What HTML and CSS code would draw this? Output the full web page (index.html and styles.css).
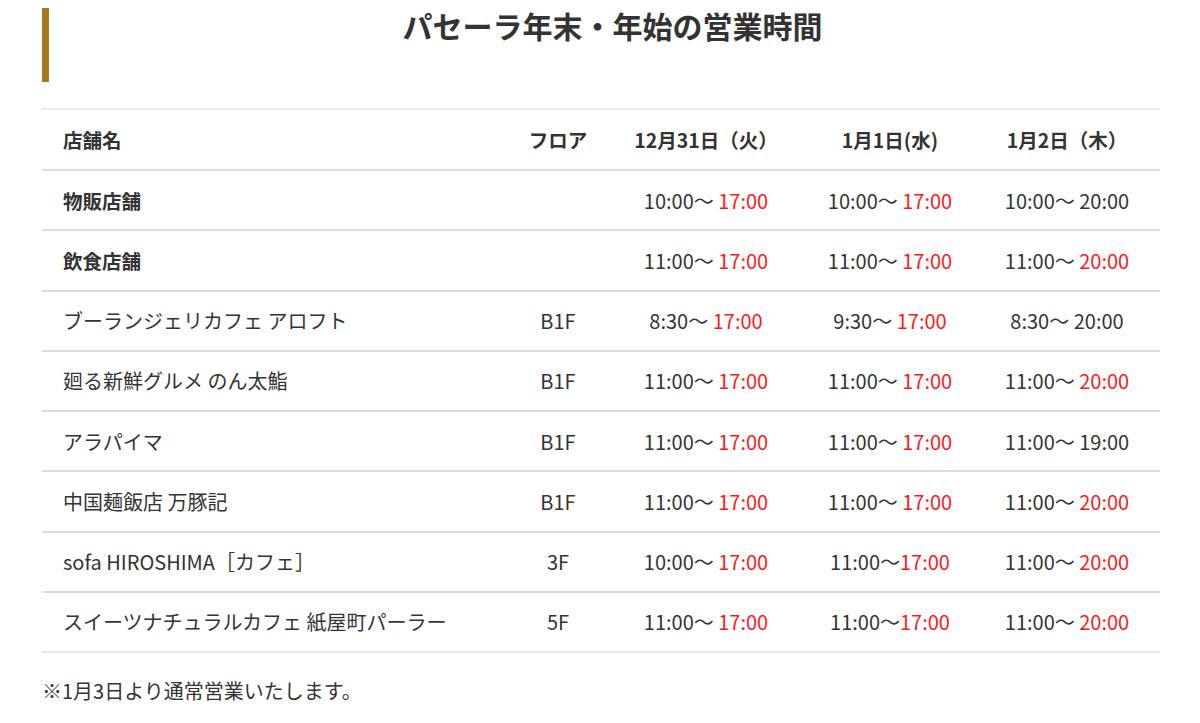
FILE: index.html
```html
<!DOCTYPE html>
<html lang="ja">
<head>
<meta charset="utf-8">
<title>パセーラ年末・年始の営業時間</title>
<link rel="stylesheet" href="styles.css">
</head>
<body>
<div class="page">
  <h2 class="heading">パセーラ年末・年始の営業時間</h2>
  <table class="hours">
    <colgroup>
      <col class="c-name"><col class="c-floor"><col class="c-d1"><col class="c-d2"><col class="c-d3">
    </colgroup>
    <thead>
      <tr>
        <th class="name">店舗名</th>
        <th>フロア</th>
        <th>12月31日（火）</th>
        <th>1月1日(水)</th>
        <th>1月2日（木）</th>
      </tr>
    </thead>
    <tbody>
      <tr>
        <td class="name strong">物販店舗</td>
        <td></td>
        <td>10:00～ <span class="red">17:00</span></td>
        <td>10:00～ <span class="red">17:00</span></td>
        <td>10:00～ 20:00</td>
      </tr>
      <tr>
        <td class="name strong">飲食店舗</td>
        <td></td>
        <td>11:00～ <span class="red">17:00</span></td>
        <td>11:00～ <span class="red">17:00</span></td>
        <td>11:00～ <span class="red">20:00</span></td>
      </tr>
      <tr>
        <td class="name">ブーランジェリカフェ アロフト</td>
        <td>B1F</td>
        <td>8:30～ <span class="red">17:00</span></td>
        <td>9:30～ <span class="red">17:00</span></td>
        <td>8:30～ 20:00</td>
      </tr>
      <tr>
        <td class="name">廻る新鮮グルメ のん太鮨</td>
        <td>B1F</td>
        <td>11:00～ <span class="red">17:00</span></td>
        <td>11:00～ <span class="red">17:00</span></td>
        <td>11:00～ <span class="red">20:00</span></td>
      </tr>
      <tr>
        <td class="name">アラパイマ</td>
        <td>B1F</td>
        <td>11:00～ <span class="red">17:00</span></td>
        <td>11:00～ <span class="red">17:00</span></td>
        <td>11:00～ 19:00</td>
      </tr>
      <tr>
        <td class="name">中国麺飯店 万豚記</td>
        <td>B1F</td>
        <td>11:00～ <span class="red">17:00</span></td>
        <td>11:00～ <span class="red">17:00</span></td>
        <td>11:00～ <span class="red">20:00</span></td>
      </tr>
      <tr>
        <td class="name">sofa HIROSHIMA［カフェ］</td>
        <td>3F</td>
        <td>10:00～ <span class="red">17:00</span></td>
        <td>11:00～<span class="red">17:00</span></td>
        <td>11:00～ <span class="red">20:00</span></td>
      </tr>
      <tr>
        <td class="name">スイーツナチュラルカフェ 紙屋町パーラー</td>
        <td>5F</td>
        <td>11:00～ <span class="red">17:00</span></td>
        <td>11:00～<span class="red">17:00</span></td>
        <td>11:00～ <span class="red">20:00</span></td>
      </tr>
    </tbody>
  </table>
  <p class="note">※1月3日より通常営業いたします。</p>
</div>
</body>
</html>
```

FILE: styles.css
```css
html, body {
  margin: 0;
  padding: 0;
  background: #ffffff;
}

body {
  font-family: "Noto Sans CJK JP", "Noto Sans", sans-serif;
  color: #333333;
}

.page {
  width: 1118px;
  padding: 8px 0 0 42px;
}

.heading {
  margin: 0;
  height: 74px;
  box-sizing: border-box;
  border-left: 7px solid #a57a1e;
  padding-left: 16px;
  font-size: 30px;
  font-weight: 700;
  line-height: 34px;
  text-align: center;
  color: #333333;
}

.hours {
  margin-top: 26px;
  width: 1118px;
  border-collapse: collapse;
  table-layout: fixed;
  border-top: 2px solid #ebebeb;
}

.c-name { width: 468px; }
.c-floor { width: 96px; }
.c-d1 { width: 200px; }
.c-d2 { width: 168px; }
.c-d3 { width: 186px; }

.hours th,
.hours td {
  height: 58.25px;
  padding: 0;
  border-bottom: 2px solid #dcdcdc;
  text-align: center;
  vertical-align: middle;
  white-space: nowrap;
}

.hours th {
  height: 59px;
  font-size: 19.5px;
  font-weight: 700;
}

.hours td {
  font-size: 20px;
  font-weight: 400;
}

.hours .name {
  text-align: left;
  padding-left: 21px;
}

.hours td.strong {
  font-weight: 700;
  font-size: 19.5px;
}

.hours tbody tr:last-child td {
  border-bottom-color: #e8e8e8;
}

.red {
  color: #ff1a1a;
}

.note {
  margin: 23px 0 0 0;
  font-size: 20px;
  line-height: 30px;
}
```
